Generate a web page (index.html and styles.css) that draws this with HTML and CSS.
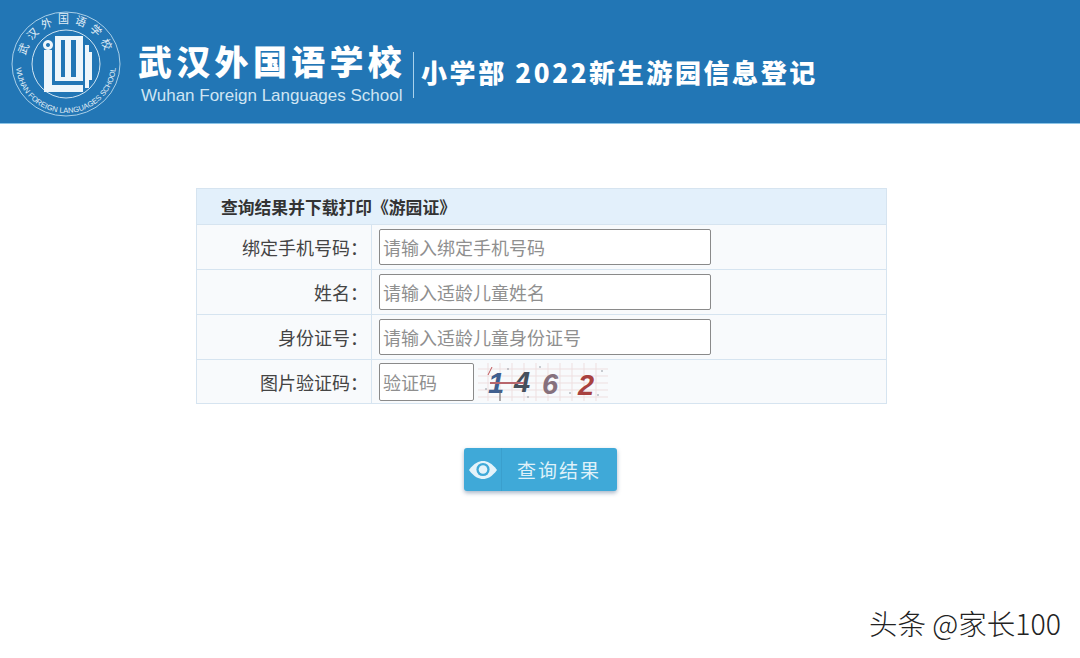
FILE: index.html
```html
<!DOCTYPE html>
<html lang="zh-CN">
<head>
  <meta charset="UTF-8">
  <title>武汉外国语学校</title>
  <link rel="stylesheet" href="styles.css">
</head>
<body>
  <header class="banner">
    <svg class="logo" width="110" height="106" viewBox="0 0 110 106">
      <defs>
        <path id="ringTop" d="M 14 53 A 41 41 0 0 1 96 53"/>
        <path id="ringBottom" d="M 5 53 A 50 49 0 0 0 105 53"/>
      </defs>
      <ellipse cx="55" cy="53" rx="54" ry="52" fill="none" stroke="#a9cfe8" stroke-width="1"/>
      <circle cx="55" cy="53" r="34" fill="none" stroke="#cfe4f2" stroke-width="1"/>
      <text class="ring-cn"><textPath href="#ringTop" startOffset="50%" text-anchor="middle">武汉外国语学校</textPath></text>
      <text class="ring-en"><textPath href="#ringBottom" startOffset="50%" text-anchor="middle">WUHAN FOREIGN LANGUAGES SCHOOL</textPath></text>
      <g fill="#eef6fb" transform="translate(0 -2)">
        <path fill-rule="evenodd" d="M37 31a5 5 0 1 0 .01 0zM37 34a2 2 0 1 1-.01 0z"/>
        <path d="M33 41h8v35h31v7H33z"/>
        <path fill-rule="evenodd" d="M44 27h28v45H44zM50 31v37h4V31zM60 31v37h5V31z"/>
        <path d="M74 36h4v7h3v28h-3v8h-4z"/>
      </g>
    </svg>
    <div class="school">
      <div class="school-cn">武汉外国语学校</div>
      <div class="school-en">Wuhan Foreign Languages School</div>
    </div>
    <div class="banner-title">小学部 2022新生游园信息登记</div>
  </header>

  <main class="content">
    <table class="form-table">
      <colgroup>
        <col class="col-label">
        <col>
      </colgroup>
      <tr class="head-row">
        <th colspan="2">查询结果并下载打印《游园证》</th>
      </tr>
      <tr>
        <td class="label">绑定手机号码：</td>
        <td><input class="field" type="text" placeholder="请输入绑定手机号码"></td>
      </tr>
      <tr>
        <td class="label">姓名：</td>
        <td><input class="field" type="text" placeholder="请输入适龄儿童姓名"></td>
      </tr>
      <tr>
        <td class="label">身份证号：</td>
        <td><input class="field" type="text" placeholder="请输入适龄儿童身份证号"></td>
      </tr>
      <tr class="last-row">
        <td class="label">图片验证码：</td>
        <td class="captcha-cell">
          <input class="field field-code" type="text" placeholder="验证码"><svg class="captcha" width="130" height="38" viewBox="0 0 130 38">
            <g stroke="#eedfe0" stroke-width="1">
              <path d="M0 6H130M0 13H130M0 20H130M0 27H130M0 34H130"/>
              <path d="M10 0V38M22 0V38M34 0V38M46 0V38M58 0V38M70 0V38M82 0V38M94 0V38M106 0V38M118 0V38"/>
            </g>
            <path d="M10 12L14 4" stroke="#c0565a" stroke-width="1"/>
            <text class="digit" x="10" y="30" fill="#3f5f8f">1</text>
            <text class="digit" x="36" y="29" fill="#46505c">4</text>
            <text class="digit" x="64" y="31" fill="#86707c">6</text>
            <text class="digit" x="100" y="32" fill="#a8413f">2</text>
            <path d="M12 20H46" stroke="#b8666c" stroke-width="2"/>
            <path d="M22 28V38" stroke="#666" stroke-width="1"/>
            <g fill="#8a8f9a">
              <circle cx="8" cy="26" r=".8"/><circle cx="30" cy="6" r=".8"/><circle cx="62" cy="4" r=".8"/>
              <circle cx="78" cy="14" r=".8"/><circle cx="92" cy="30" r=".8"/><circle cx="124" cy="8" r=".8"/>
              <circle cx="120" cy="32" r=".8"/><circle cx="50" cy="34" r=".8"/>
            </g>
          </svg>
        </td>
      </tr>
    </table>

    <button class="query-btn" type="button">
      <span class="query-icon">
        <svg width="30" height="20" viewBox="0 0 30 20">
          <path d="M1 10C6 3 11 1 15 1s9 2 14 9c-5 7-10 9-14 9S6 17 1 10z" fill="#e4f3fa"/>
          <circle cx="15" cy="9.5" r="6.6" fill="#3fa9d8"/>
          <circle cx="15" cy="9.5" r="4.3" fill="#e4f3fa"/>
        </svg>
      </span>
      <span class="query-text">查询结果</span>
    </button>
  </main>

  <div class="watermark">头条 @家长100</div>
</body>
</html>
```

FILE: styles.css
```css
body {
  margin: 0;
  background: #fff;
  font-family: "Noto Sans CJK SC", "Liberation Sans", sans-serif;
  color: #333;
  height: 658px;
  overflow: hidden;
  position: relative;
}

.banner {
  height: 123px;
  background: #2276b5;
  border-bottom: 1px solid #8cc4e6;
  display: flex;
  align-items: flex-start;
  color: #fff;
  padding-left: 11px;
}
.logo {
  margin-top: 11px;
  flex: none;
}
.ring-cn {
  font-size: 11px;
  letter-spacing: 5px;
  fill: #e4f0f8;
}
.ring-en {
  font-family: "Liberation Sans", sans-serif;
  font-size: 7.5px;
  fill: #e4f0f8;
}
.school {
  margin-left: 17px;
  margin-top: 52px;
  width: 275px;
  height: 46px;
  border-right: 1px solid #a9d2ec;
  flex: none;
}
.school-cn {
  font-size: 34px;
  font-weight: 900;
  line-height: 46px;
  letter-spacing: 4.3px;
  white-space: nowrap;
  height: 46px;
  margin-top: -14px;
}
.school-en {
  font-family: "Liberation Sans", sans-serif;
  font-size: 17px;
  line-height: 20px;
  color: #cfe5f3;
  margin-left: 3px;
  margin-top: 2px;
  white-space: nowrap;
}
.banner-title {
  margin-left: 7px;
  margin-top: 54px;
  font-size: 26px;
  line-height: 36px;
  font-weight: 900;
  letter-spacing: 2.6px;
  white-space: nowrap;
}

.content {
  display: flex;
  flex-direction: column;
  align-items: center;
  padding-top: 64px;
  margin-left: 1px;
}
.form-table {
  width: 691px;
  margin-left: 2px;
  border-collapse: collapse;
  table-layout: fixed;
  font-size: 18px;
}
.col-label {
  width: 175px;
}
.form-table td,
.form-table th {
  border: 1px solid #d6e4f0;
  padding: 0;
}
.head-row th {
  height: 35px;
  background: #e3f0fb;
  color: #333;
  text-align: left;
  padding-left: 24px;
  font-size: 16.8px;
  font-weight: 700;
}
.form-table td {
  height: 44px;
  background: #f8fafc;
  padding-left: 7px;
}
.form-table .last-row td {
  height: 43px;
}
.form-table td.label {
  padding: 0 3px 0 0;
  text-align: right;
  color: #444;
}
.field {
  box-sizing: border-box;
  width: 332px;
  height: 36px;
  border: 1px solid #8a8a8a;
  border-radius: 2px;
  background: #fff;
  padding: 0 3px;
  font: inherit;
  display: block;
}
.field::placeholder {
  color: #8f8f8f;
  opacity: 1;
}
.field-code {
  width: 95px;
  height: 38px;
  display: inline-block;
  vertical-align: middle;
}
.captcha {
  vertical-align: middle;
  margin-left: 4px;
}
.digit {
  font-family: "Liberation Sans", sans-serif;
  font-size: 29px;
  font-weight: 700;
  font-style: italic;
}

.query-btn {
  margin-top: 44px;
  width: 153px;
  height: 43px;
  padding: 0;
  border: none;
  border-radius: 3px;
  background: #3fa9d8;
  box-shadow: 0 2px 4px rgba(60, 90, 130, 0.45);
  color: #dff1f9;
  display: flex;
  align-items: center;
  font-family: inherit;
}
.query-icon {
  width: 38px;
  height: 43px;
  border-right: 1px solid #3a9fcd;
  display: flex;
  align-items: center;
  justify-content: center;
  box-sizing: border-box;
}
.query-text {
  margin-left: 15px;
  font-size: 19px;
  letter-spacing: 2px;
  white-space: nowrap;
}

.watermark {
  position: absolute;
  left: 869px;
  top: 603px;
  font-size: 28.5px;
  line-height: 40px;
  color: #222;
  font-weight: 300;
  white-space: nowrap;
}
```
